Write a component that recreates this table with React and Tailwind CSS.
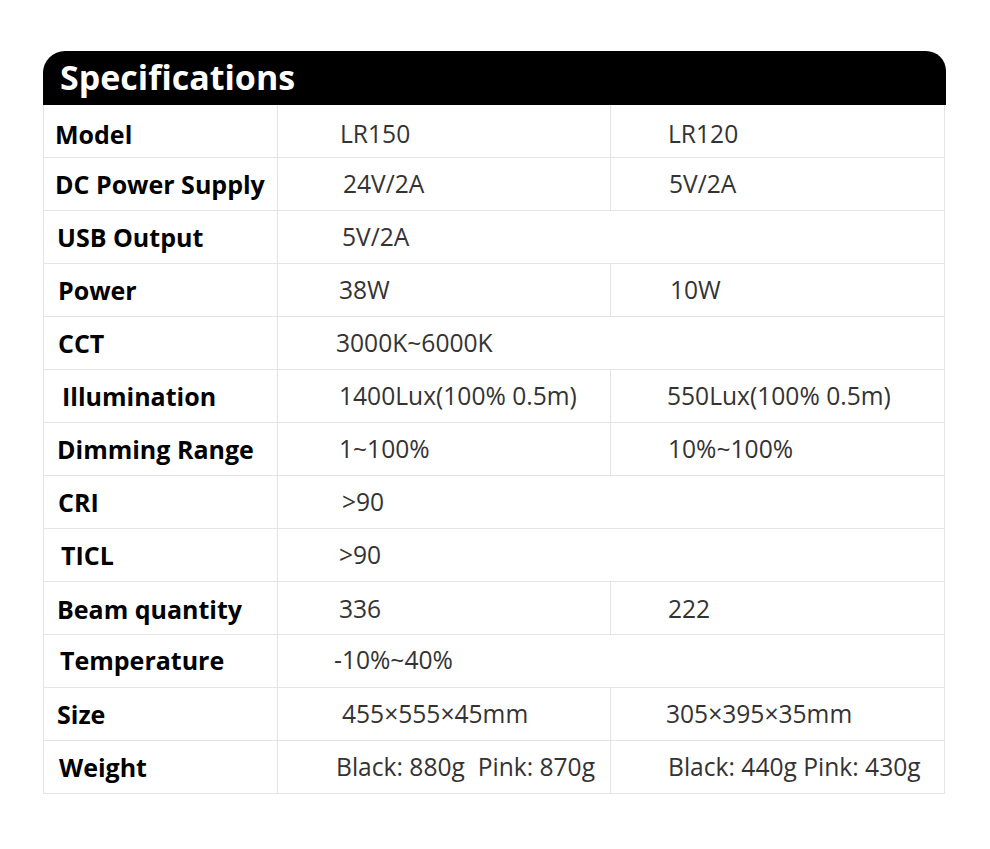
import React from "react";

const rows = [
  { label: "Model", lp: "pl-[11px]", a: "LR150", ap: "pl-[62px]", b: "LR120", bp: "pl-[57px]", shift: "translate-y-[3px]" },
  { label: "DC Power Supply", lp: "pl-[11px]", a: "24V/2A", ap: "pl-[65px]", b: "5V/2A", bp: "pl-[58px]" },
  { label: "USB Output", lp: "pl-[13px]", a: "5V/2A", ap: "pl-[64px]", span: true },
  { label: "Power", lp: "pl-[14px]", a: "38W", ap: "pl-[61px]", b: "10W", bp: "pl-[59px]" },
  { label: "CCT", lp: "pl-[14px]", a: "3000K~6000K", ap: "pl-[58px]", span: true },
  { label: "Illumination", lp: "pl-[18px]", a: "1400Lux(100% 0.5m)", ap: "pl-[61px]", b: "550Lux(100% 0.5m)", bp: "pl-[56px]" },
  { label: "Dimming Range", lp: "pl-[13px]", a: "1~100%", ap: "pl-[61px]", b: "10%~100%", bp: "pl-[57px]" },
  { label: "CRI", lp: "pl-[14px]", a: ">90", ap: "pl-[64px]", span: true },
  { label: "TICL", lp: "pl-[17px]", a: ">90", ap: "pl-[61px]", span: true },
  { label: "Beam quantity", lp: "pl-[13px]", a: "336", ap: "pl-[61px]", b: "222", bp: "pl-[57px]", shift: "translate-y-[1px]" },
  { label: "Temperature", lp: "pl-[16px]", a: "-10%~40%", ap: "pl-[56px]", span: true, shift: "-translate-y-[1px]" },
  { label: "Size", lp: "pl-[13px]", a: "455×555×45mm", ap: "pl-[64px]", b: "305×395×35mm", bp: "pl-[55px]" },
  { label: "Weight", lp: "pl-[15px]", a: "Black: 880g  Pink: 870g", ap: "pl-[58px]", b: "Black: 440g Pink: 430g", bp: "pl-[57px]" },
];

export default function App() {
  return (
    <div
      className="min-h-screen bg-white pt-[51px]"
      style={{ fontFamily: '"Open Sans", "Liberation Sans", sans-serif' }}
    >
      <div className="ml-[43px] w-[903px] h-[54px] bg-black rounded-tl-[22px] rounded-tr-[20px] flex items-center pl-[17px]">
        <h1 className="text-white font-bold text-[34px] leading-none pb-[2px]">
          Specifications
        </h1>
      </div>

      <div className="ml-[43px] w-[902px] border-l border-r border-[#e4e4e4]">
        {rows.map((r) => (
          <div
            key={r.label}
            className="flex h-[53px] border-b border-[#e4e4e4] leading-none"
          >
            <div
              className={`w-[234px] shrink-0 border-r border-[#e4e4e4] flex items-center font-bold text-black text-[25px] ${r.lp}`}
            >
              <span className={r.shift}>{r.label}</span>
            </div>
            {r.span ? (
              <div className={`flex-1 flex items-center text-[#333333] text-[24.6px] ${r.ap}`}>
                <span className={r.shift}>{r.a}</span>
              </div>
            ) : (
              <>
                <div
                  className={`w-[333px] shrink-0 border-r border-[#e4e4e4] flex items-center text-[#333333] text-[24.6px] whitespace-pre ${r.ap}`}
                >
                  <span className={r.shift}>{r.a}</span>
                </div>
                <div className={`flex-1 flex items-center text-[#333333] text-[24.6px] whitespace-pre ${r.bp}`}>
                  <span className={r.shift}>{r.b}</span>
                </div>
              </>
            )}
          </div>
        ))}
      </div>
    </div>
  );
}
